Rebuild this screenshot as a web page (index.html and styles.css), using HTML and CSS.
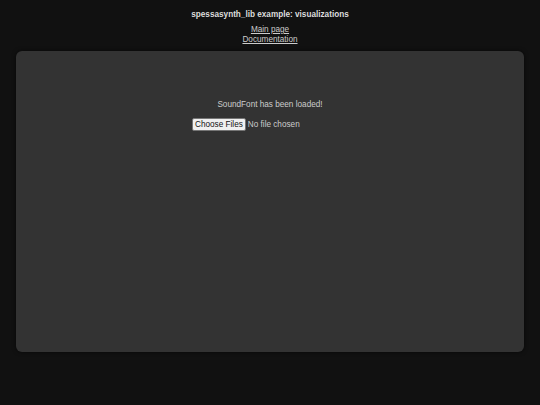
FILE: index.html
```html
<!DOCTYPE html>
<html>
<head>
<meta charset="utf-8">
<title>spessasynth_lib example: visualizations</title>
<link rel="stylesheet" href="styles.css">
</head>
<body>
<header class="header">
  <h1 class="title">spessasynth_lib example: visualizations</h1>
  <nav class="links">
    <a href="#">Main page</a>
    <a href="#">Documentation</a>
  </nav>
</header>
<main class="panel">
  <p class="status">SoundFont has been loaded!</p>
  <div class="file-row">
    <input type="file" class="file-input" multiple>
  </div>
</main>
</body>
</html>
```

FILE: styles.css
```css
html, body {
  margin: 0;
  padding: 0;
  background: #111111;
  width: 540px;
  height: 405px;
  overflow: hidden;
}
body {
  font-family: "Liberation Sans", Arial, sans-serif;
  font-size: 8.2px;
  color: #cccccc;
}
.header {
  text-align: center;
  padding-top: 10px;
}
.title {
  margin: 0;
  font-size: 8.2px;
  line-height: 10px;
  font-weight: bold;
  color: #dddddd;
}
.links {
  display: flex;
  flex-direction: column;
  align-items: center;
  margin-top: 5px;
  line-height: 10px;
}
.links a {
  color: #cccccc;
  text-decoration: underline;
}
.panel {
  margin: 6px 16px 0;
  height: 301px;
  background: #333333;
  border-radius: 6px;
  box-shadow: 0 0 4px rgba(0,0,0,0.6);
  box-sizing: border-box;
  padding-top: 49px;
}
.status {
  margin: 0;
  text-align: center;
  line-height: 10px;
}
.file-row {
  padding-left: 176px;
  margin-top: 8px;
  height: 13px;
  display: flex;
  align-items: center;
}
.file-input {
  font-family: "Liberation Sans", Arial, sans-serif;
  font-size: 8.2px;
  line-height: 10px;
  color: #cccccc;
}
.file-input::file-selector-button {
  font-family: "Liberation Sans", Arial, sans-serif;
  font-size: 8.2px;
  line-height: 10px;
  color: #111111;
  background: #f0f0f0;
  border: 1px solid #767676;
  border-radius: 2px;
  padding: 1px 2px 0;
  margin: 0 2px 0 0;
}
```
